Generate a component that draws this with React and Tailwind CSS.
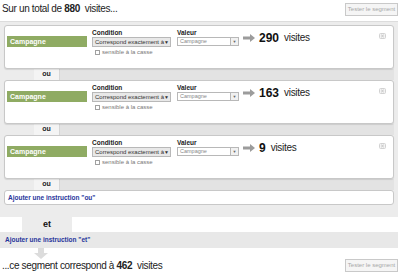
import React from 'react';

// Segment editor: "ou" conditions inside a gray block, then "et" bar and result
const FONT = { fontFamily: '"Liberation Sans", Arial, sans-serif' };

function RightArrow() {
  return (
    <svg width="12" height="8" viewBox="0 0 12 8" className="shrink-0">
      <path d="M0 2.6h7V0l5 4-5 4V5.4H0z" fill="#9c9c9c" />
    </svg>
  );
}

function DownArrow() {
  return (
    <svg width="14" height="11" viewBox="0 0 14 11">
      <path d="M4 0h6v5h4l-7 6-7-6h4z" fill="#dcdcdc" />
    </svg>
  );
}

function CloseIcon() {
  return (
    <svg width="7" height="6" viewBox="0 0 7 6">
      <rect x="0.5" y="0.5" width="6" height="5" rx="1" fill="#f3f3f3" stroke="#d2d2d2" />
      <path d="M2.2 1.8l2.6 2.4M4.8 1.8L2.2 4.2" stroke="#bcbcbc" strokeWidth="0.8" />
    </svg>
  );
}

function TestButton() {
  return (
    <div className="flex h-[13px] w-[53px] items-center justify-center whitespace-nowrap border border-[#c9c9c9] bg-[#f5f5f5] text-[6px] text-[#a8a8a8]">
      Tester le segment
    </div>
  );
}

function ConditionCard({ count }) {
  return (
    <div className="relative h-[44px] rounded-[3px] border border-[#c8c8c8] bg-white shadow-[0_1px_1px_rgba(0,0,0,0.1)]">
      <div className="flex items-start pl-[2px] pt-[3px]">
        <div className="mt-[7px] h-[11px] w-[80px] bg-[#8fab63] pl-[3px] text-[7px] font-bold leading-[11px] text-white">
          Campagne
        </div>

        <div className="ml-[5px] w-[79px]">
          <div className="text-[6.5px] font-bold leading-[8px] text-[#222]">Condition</div>
          <div className="flex h-[10px] items-center justify-between whitespace-nowrap border border-[#b8b8b8] bg-[#e8e8e8] pl-[2px] pr-[1px] text-[6px] leading-none text-[#333]">
            <span>Correspond exactement à</span>
            <span className="text-[5px]">▼</span>
          </div>
          <div className="mt-[2px] flex items-center gap-[2px] pl-[3px]">
            <span className="h-[5px] w-[5px] border border-[#a0a0a0] bg-white" />
            <span className="whitespace-nowrap text-[6px] leading-[7px] text-[#777]">sensible à la casse</span>
          </div>
        </div>

        <div className="ml-[6px]">
          <div className="text-[6.5px] font-bold leading-[8px] text-[#222]">Valeur</div>
          <div className="flex">
            <div className="flex h-[9px] w-[54px] items-center border border-[#b8b8b8] bg-white pl-[2px] text-[5.5px] leading-none text-[#888]">
              Campagne
            </div>
            <div className="flex h-[9px] w-[8px] items-center justify-center border border-l-0 border-[#b8b8b8] bg-[#f1f1f1] text-[4px] text-[#666]">
              ▼
            </div>
          </div>
        </div>

        <div className="ml-[4px] mt-[3px] flex h-[12px] items-center">
          <RightArrow />
          <span className="ml-[4px] text-[12px] font-bold leading-none text-[#111]">{count}</span>
          <span className="ml-[5px] text-[10px] leading-none tracking-[-0.3px] text-[#222]">visites</span>
        </div>
      </div>
      <div className="absolute right-[7px] top-[7px]">
        <CloseIcon />
      </div>
    </div>
  );
}

function OuRow() {
  return (
    <div className="flex h-[11px]">
      <div className="w-[30px]" />
      <div className="flex w-[25px] items-center justify-center bg-[#f4f4f4] text-[7px] font-bold text-[#222]">ou</div>
      <div className="flex-1 border-l border-[#d6d6d6] bg-[#e3e3e3]" />
    </div>
  );
}

export default function App() {
  return (
    <div className="h-[274px] w-[400px] overflow-hidden bg-white" style={FONT}>
      <div className="flex h-[21px] items-start justify-between pr-[2px]">
        <div className="whitespace-nowrap pl-[2px] pt-[3px] text-[10px] leading-[12px] tracking-[-0.35px] text-[#222]">
          Sur un total de <span className="font-bold">880</span>&nbsp; visites...
        </div>
        <div className="mt-[3px]">
          <TestButton />
        </div>
      </div>

      <div className="w-[398px] border-t border-[#dcdcdc] bg-[#ececec] pb-[12px] pl-[4px] pr-[4px] pt-[3px]">
        <ConditionCard count="290" />
        <OuRow />
        <ConditionCard count="163" />
        <OuRow />
        <ConditionCard count="9" />
        <OuRow />
        <div className="flex h-[15px] items-center rounded-[3px] border border-[#c8c8c8] bg-white pl-[3px] text-[6.5px] font-bold text-[#27359b]">
          Ajouter une instruction "ou"
        </div>
      </div>

      <div className="flex h-[15px]">
        <div className="ml-[22px] flex w-[50px] items-center justify-center bg-[#ececec] text-[9px] font-bold text-[#111]">
          et
        </div>
      </div>
      <div className="flex h-[16px] w-[398px] items-center bg-[#e8e8e8] pl-[5px] text-[6.5px] font-bold text-[#27359b]">
        Ajouter une instruction "et"
      </div>
      <div className="ml-[34px] flex h-[11px] items-start">
        <DownArrow />
      </div>
      <div className="flex items-center justify-between pr-[2px]">
        <div className="whitespace-nowrap pl-[2px] text-[10px] leading-[13px] tracking-[-0.35px] text-[#222]">
          ...ce segment correspond à <span className="font-bold">462</span>&nbsp; visites
        </div>
        <TestButton />
      </div>
    </div>
  );
}
